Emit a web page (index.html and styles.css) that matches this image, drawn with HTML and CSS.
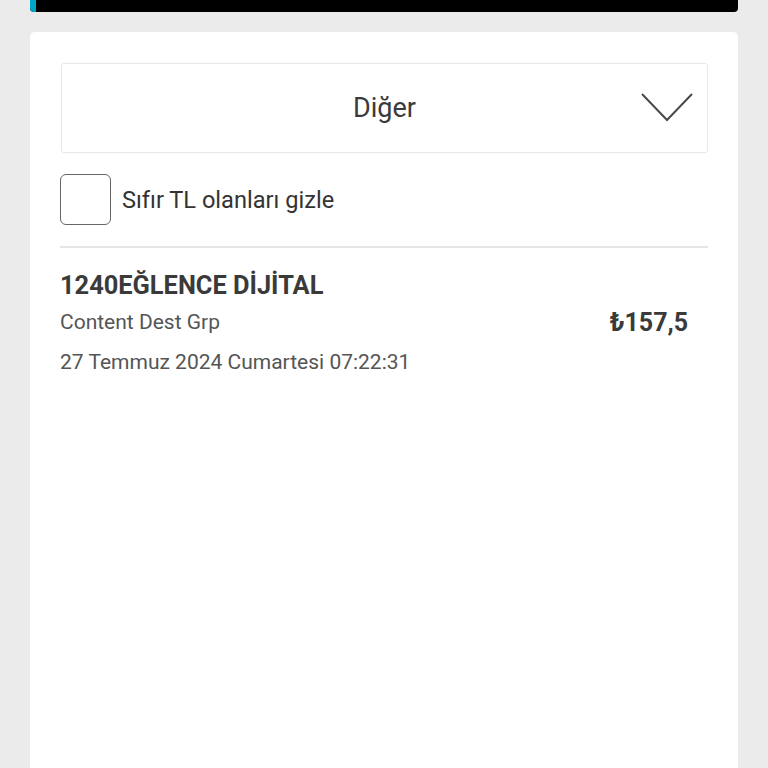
FILE: index.html
```html
<!DOCTYPE html>
<html lang="tr">
<head>
<meta charset="utf-8">
<link rel="stylesheet" href="styles.css">
</head>
<body>
<div class="page">
  <div class="topbar"><div class="accent"></div></div>
  <div class="card">
    <div class="select">
      <span class="select-text">Diğer</span>
      <svg class="chevron" width="52" height="29" viewBox="0 0 52 29"><path d="M1 1 L26 27 L51 1" fill="none" stroke="#4a4a4a" stroke-width="2"/></svg>
    </div>
    <label class="check">
      <span class="box"></span>
      <span class="check-text">Sıfır TL olanları gizle</span>
    </label>
    <div class="divider"></div>
    <div class="item">
      <div class="item-title">1240EĞLENCE DİJİTAL</div>
      <div class="item-row">
        <span class="item-sub">Content Dest Grp</span>
        <span class="item-price">₺157,5</span>
      </div>
      <div class="item-date">27 Temmuz 2024 Cumartesi 07:22:31</div>
    </div>
  </div>
</div>
</body>
</html>
```

FILE: styles.css
```css
* { box-sizing: border-box; }
html, body { margin: 0; padding: 0; }
body {
  background: #ebebeb;
  font-family: Roboto, "Liberation Sans", sans-serif;
  color: #333;
  width: 768px;
  height: 768px;
  overflow: hidden;
}
.page {
  padding: 0 30px;
  display: flex;
  flex-direction: column;
}
.topbar {
  height: 12px;
  background: #000;
  border-radius: 0 0 4px 4px;
  overflow: hidden;
  display: flex;
}
.accent {
  width: 6px;
  background: #00a6c8;
}
.card {
  margin-top: 20px;
  background: #fff;
  border-radius: 5px 5px 0 0;
  height: 760px;
  padding: 31px 30px 0 30px;
  display: flex;
  flex-direction: column;
}
.select {
  height: 90px;
  border: 1.5px solid #e8e8e8;
  border-radius: 3px;
  position: relative;
  display: flex;
  align-items: center;
  justify-content: center;
  margin: 0 0 0 1px;
}
.select-text {
  font-size: 27px;
  color: #3a3a3a;
  margin-top: 0;
}
.chevron {
  position: absolute;
  right: 14px;
  top: 29px;
}
.check {
  display: flex;
  align-items: center;
  margin-top: 21px;
  gap: 11px;
}
.box {
  width: 51px;
  height: 51px;
  border: 1.5px solid #666;
  border-radius: 6px;
}
.check-text {
  font-size: 23.6px;
  color: #333;
  margin-top: 1px;
}
.divider {
  height: 1.5px;
  background: #e6e6e6;
  margin-top: 21px;
}
.item {
  padding-top: 22px;
  display: flex;
  flex-direction: column;
}
.item-title {
  font-size: 25.4px;
  font-weight: bold;
  color: #3a3a3a;
  line-height: 30px;
}
.item-row {
  display: flex;
  justify-content: space-between;
  align-items: center;
  padding-right: 20px;
  margin-top: 8px;
}
.item-sub {
  font-size: 21px;
  color: #555;
  line-height: 28px;
}
.item-price {
  font-size: 25px;
  font-weight: bold;
  color: #3a3a3a;
}
.item-date {
  font-size: 21px;
  color: #555;
  line-height: 28px;
  margin-top: 11px;
}
```
